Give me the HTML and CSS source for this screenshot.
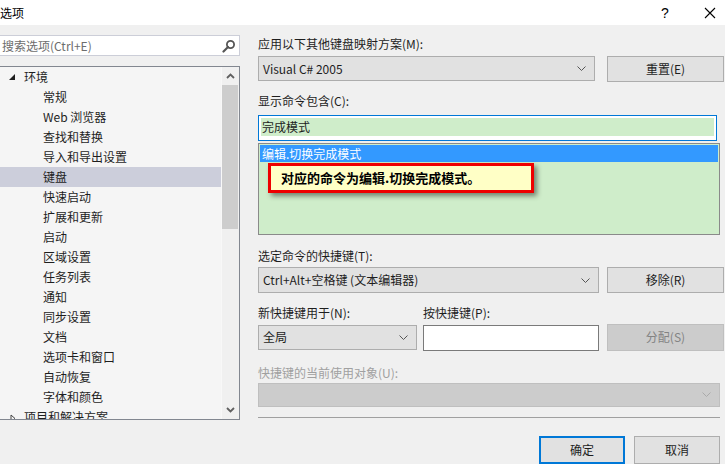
FILE: index.html
```html
<!DOCTYPE html>
<html>
<head>
<meta charset="utf-8">
<link rel="stylesheet" href="styles.css">
</head>
<body>
<div class="window">
  <div class="titlebar">
    <span class="title">选项</span>
    <span class="tb-help">?</span>
    <span class="tb-close">
      <svg width="12" height="12" viewBox="0 0 12 12"><path d="M1 1L11 11M11 1L1 11" stroke="#000" stroke-width="1.1" fill="none"/></svg>
    </span>
  </div>
  <div class="main">
    <div class="left">
      <div class="search">
        <span class="search-ph">搜索选项(Ctrl+E)</span>
        <svg class="search-icon" width="14" height="14" viewBox="0 0 14 14"><circle cx="8.5" cy="5.5" r="3.6" stroke="#555" stroke-width="1.8" fill="none"/><path d="M6 8L1.5 12.5" stroke="#555" stroke-width="2.2" stroke-linecap="round"/></svg>
      </div>
      <div class="tree">
        <div class="tree-items">
          <div class="item top"><svg class="tri" width="8" height="8" viewBox="0 0 8 8"><path d="M7 1L7 7L1 7Z" fill="#1e1e1e"/></svg>环境</div>
          <div class="item child">常规</div>
          <div class="item child">Web 浏览器</div>
          <div class="item child">查找和替换</div>
          <div class="item child">导入和导出设置</div>
          <div class="item child sel">键盘</div>
          <div class="item child">快速启动</div>
          <div class="item child">扩展和更新</div>
          <div class="item child">启动</div>
          <div class="item child">区域设置</div>
          <div class="item child">任务列表</div>
          <div class="item child">通知</div>
          <div class="item child">同步设置</div>
          <div class="item child">文档</div>
          <div class="item child">选项卡和窗口</div>
          <div class="item child">自动恢复</div>
          <div class="item child">字体和颜色</div>
          <div class="item top"><svg class="tri tri-c" width="8" height="8" viewBox="0 0 8 8"><path d="M2 1L6 4.5L2 8Z" fill="none" stroke="#444" stroke-width="1"/></svg>项目和解决方案</div>
        </div>
        <div class="vscroll">
          <div class="sb-arrow"><svg width="9" height="6" viewBox="0 0 9 6"><path d="M1 5L4.5 1.5L8 5" stroke="#606060" stroke-width="1.8" fill="none"/></svg></div>
          <div class="sb-thumb"></div>
          <div class="sb-space"></div>
          <div class="sb-arrow"><svg width="9" height="6" viewBox="0 0 9 6"><path d="M1 1L4.5 4.5L8 1" stroke="#606060" stroke-width="1.8" fill="none"/></svg></div>
        </div>
      </div>
    </div>
    <div class="right">
      <div class="label l1">应用以下其他键盘映射方案(M):</div>
      <div class="row r1">
        <div class="combo w-map"><span>Visual C# 2005</span><svg class="chev" width="9" height="5" viewBox="0 0 9 5"><path d="M0.5 0.5L4.5 4.5L8.5 0.5" stroke="#555" stroke-width="1" fill="none"/></svg></div>
        <div class="btn">重置(E)</div>
      </div>
      <div class="label l2">显示命令包含(C):</div>
      <div class="filter"><div class="filter-in">完成模式</div></div>
      <div class="listbox">
        <div class="list-sel">编辑.切换完成模式</div>
        <div class="callout">对应的命令为编辑.切换完成模式。</div>
      </div>
      <div class="label l3">选定命令的快捷键(T):</div>
      <div class="row r3">
        <div class="combo w-sc"><span>Ctrl+Alt+空格键 (文本编辑器)</span><svg class="chev" width="9" height="5" viewBox="0 0 9 5"><path d="M0.5 0.5L4.5 4.5L8.5 0.5" stroke="#555" stroke-width="1" fill="none"/></svg></div>
        <div class="btn">移除(R)</div>
      </div>
      <div class="row labels">
        <div class="label w-scope">新快捷键用于(N):</div>
        <div class="label">按快捷键(P):</div>
      </div>
      <div class="row r4">
        <div class="combo w-scope"><span>全局</span><svg class="chev" width="9" height="5" viewBox="0 0 9 5"><path d="M0.5 0.5L4.5 4.5L8.5 0.5" stroke="#555" stroke-width="1" fill="none"/></svg></div>
        <div class="keyinput"></div>
        <div class="btn disabled">分配(S)</div>
      </div>
      <div class="label l5 dim">快捷键的当前使用对象(U):</div>
      <div class="combo combo-dis"><span></span><svg class="chev" width="9" height="5" viewBox="0 0 9 5"><path d="M0.5 0.5L4.5 4.5L8.5 0.5" stroke="#aaa" stroke-width="1" fill="none"/></svg></div>
      <div class="sep"></div>
      <div class="footer">
        <div class="btn fbtn ok">确定</div>
        <div class="btn fbtn">取消</div>
      </div>
    </div>
  </div>
</div>
</body>
</html>
```

FILE: styles.css
```css
html, body {
  margin: 0;
  padding: 0;
}
body {
  width: 725px;
  height: 464px;
  overflow: hidden;
  background: #f0f0f0;
  font-family: "Noto Sans CJK SC", "Noto Sans", sans-serif;
  font-size: 12px;
  color: #1e1e1e;
}
.window {
  width: 725px;
  height: 464px;
  display: flex;
  flex-direction: column;
}
.titlebar {
  height: 25px;
  background: #fff;
  display: flex;
  align-items: center;
  flex-shrink: 0;
}
.title {
  font-size: 12px;
  color: #000;
  margin-left: 0;
  line-height: 16px;
  flex: 1;
}
.tb-help {
  font-family: "Liberation Sans", sans-serif;
  font-size: 14px;
  width: 12px;
  margin-right: 31px;
  color: #000;
}
.tb-close {
  width: 12px;
  height: 12px;
  margin-right: 9px;
  display: flex;
}
.main {
  display: flex;
  flex: 1;
  min-height: 0;
}
.left {
  width: 240px;
  flex-shrink: 0;
  padding-top: 10px;
  display: flex;
  flex-direction: column;
}
.search {
  height: 21px;
  box-sizing: border-box;
  border: 1px solid #ccced8;
  border-left: none;
  background: #fff;
  display: flex;
  align-items: center;
  padding-left: 2px;
  padding-right: 3px;
}
.search-ph {
  flex: 1;
  color: #6d6d6d;
  line-height: 16px;
}
.search-icon {
  display: block;
}
.tree {
  margin-top: 10px;
  height: 354px;
  box-sizing: border-box;
  border: 1px solid #828790;
  border-left: none;
  background: #f5f5f5;
  display: flex;
  overflow: hidden;
}
.tree-items {
  flex: 1;
  padding-top: 0;
}
.item {
  height: 20px;
  line-height: 20px;
  white-space: nowrap;
  color: #1e1e1e;
  position: relative;
}
.item.top {
  padding-left: 24px;
}
.item.child {
  padding-left: 43px;
}
.item.sel {
  background: #cccedb;
}
.tri {
  position: absolute;
  left: 8px;
  top: 6px;
}
.tri-c {
  left: 9px;
  top: 7px;
}
.vscroll {
  width: 17px;
  background: #f0f0f0;
  border-left: 1px solid #f8f8f8;
  display: flex;
  flex-direction: column;
}
.sb-arrow {
  height: 18px;
  display: flex;
  align-items: center;
  justify-content: center;
}
.sb-thumb {
  height: 144px;
  background: #cdcdcd;
  margin: 0 1px 0 0;
}
.sb-space {
  flex: 1;
}
.right {
  margin-left: 18px;
  width: 466px;
  display: flex;
  flex-direction: column;
}
.label {
  line-height: 16px;
  height: 16px;
  white-space: nowrap;
}
.dim {
  color: #a0a0a0;
}
.l1 { margin-top: 11px; }
.row {
  display: flex;
}
.r1 { margin-top: 4px; height: 26px; }
.combo {
  height: 25px;
  box-sizing: border-box;
  border: 1px solid #adadad;
  background: #e1e1e1;
  display: flex;
  align-items: center;
  padding-left: 4px;
  padding-right: 8px;
}
.combo span {
  flex: 1;
  line-height: 16px;
  white-space: nowrap;
}
.w-map { width: 337px; }
.btn {
  height: 26px;
  box-sizing: border-box;
  width: 117px;
  margin-left: auto;
  border: 1px solid #adadad;
  background: #e1e1e1;
  display: flex;
  align-items: center;
  justify-content: center;
  line-height: 16px;
}
.btn.disabled {
  background: #cccccc;
  border-color: #bfbfbf;
  color: #838383;
  height: 27px;
}
.l2 { margin-top: 11px; }
.filter {
  margin-top: 6px;
  width: 459px;
  height: 27px;
  box-sizing: border-box;
  border: 1px solid #0078d7;
  background: #fff;
  padding: 2px 2px 0 2px;
}
.filter-in {
  background: #cfedca;
  height: 18px;
  line-height: 18px;
  padding-left: 1px;
}
.listbox {
  margin-top: 2px;
  width: 462px;
  height: 94px;
  box-sizing: border-box;
  border: 1px solid #8a8a8a;
  background: #cfedca;
  padding: 1px;
  position: relative;
}
.list-sel {
  background: #3399ff;
  color: #fff;
  height: 17px;
  line-height: 17px;
  padding-left: 2px;
}
.callout {
  position: absolute;
  left: 9px;
  top: 19px;
  width: 266px;
  height: 30px;
  box-sizing: border-box;
  border: 3px solid #ee0000;
  background: #ffffc6;
  box-shadow: 3px 3px 5px rgba(0,0,0,0.45);
  font-weight: bold;
  font-size: 13px;
  color: #000;
  line-height: 23px;
  padding-left: 10px;
  white-space: nowrap;
}
.l3 { margin-top: 13px; }
.r3 { margin-top: 3px; height: 27px; }
.w-sc { width: 341px; height: 26px; }
.labels { margin-top: 11px; height: 16px; }
.w-scope { width: 159px; flex-shrink: 0; }
.labels .w-scope { margin-right: 6px; }
.r4 { margin-top: 3px; height: 27px; }
.r4 .combo { height: 25px; margin-top: 1px; }
.keyinput {
  margin-left: 6px;
  margin-top: 1px;
  width: 176px;
  height: 26px;
  box-sizing: border-box;
  border: 1px solid #7a7a7a;
  background: #fff;
}
.l5 { margin-top: 14px; }
.combo-dis {
  margin-top: 2px;
  width: 462px;
  height: 25px;
  background: #cccccc;
  border-color: #bfbfbf;
}
.sep {
  margin-top: 10px;
  width: 462px;
  height: 1px;
  background: #a0a0a0;
}
.footer {
  margin-top: 18px;
  display: flex;
  justify-content: flex-end;
  padding-right: 4px;
  gap: 9px;
}
.fbtn {
  margin-left: 0;
  width: 86px;
  height: 28px;
}
.ok {
  border: 2px solid #0078d7;
}
```
